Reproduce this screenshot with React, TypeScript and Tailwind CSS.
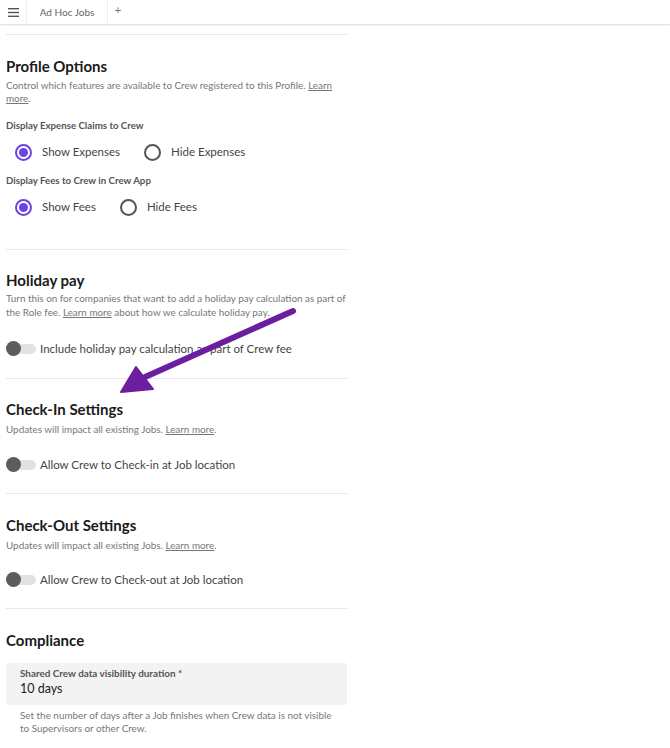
import React from "react";

const font = { fontFamily: "Lato, 'Noto Sans', sans-serif" };

function Radio({ checked, label }: { checked?: boolean; label: string }) {
  return (
    <div className="flex items-center gap-[10px]">
      {checked ? (
        <span className="w-[17px] h-[17px] rounded-full border-2 border-[#6a45e0] flex items-center justify-center">
          <span className="w-[9px] h-[9px] rounded-full bg-[#6a45e0]" />
        </span>
      ) : (
        <span className="w-[17px] h-[17px] rounded-full border-2 border-[#555]" />
      )}
      <span className="text-[11.5px] text-[#444]">{label}</span>
    </div>
  );
}

function Toggle({ label }: { label: string }) {
  return (
    <div className="flex items-center gap-[4px] h-[15px]">
      <div className="relative w-[30px] h-[15px] flex items-center">
        <div className="w-[30px] h-[10px] rounded-full bg-[#e2e2e2]" />
        <div className="absolute left-0 top-0 w-[15px] h-[15px] rounded-full bg-[#5c5c5c]" />
      </div>
      <span className="text-[11.5px] text-[#444] leading-[15px]">{label}</span>
    </div>
  );
}

function LearnMore({ children = "Learn more" }: { children?: React.ReactNode }) {
  return <span className="underline">{children}</span>;
}

export default function App() {
  return (
    <div className="relative w-[670px] h-[748px] bg-white overflow-hidden" style={font}>
      <div className="h-[25px] flex items-stretch border-b border-[#e6e6e6] shadow-[0_1px_2px_rgba(0,0,0,0.06)]">
        <div className="w-[27px] flex items-center justify-center border-r border-[#eee]">
          <svg width="11" height="9" viewBox="0 0 11 9">
            <rect x="0" y="0" width="11" height="1.4" fill="#555" />
            <rect x="0" y="3.8" width="11" height="1.4" fill="#555" />
            <rect x="0" y="7.6" width="11" height="1.4" fill="#555" />
          </svg>
        </div>
        <div className="w-[81px] flex items-center justify-center border-r border-[#eee] text-[10px] text-[#666]">
          Ad Hoc Jobs
        </div>
        <div className="w-[20px] flex items-center justify-center text-[12px] text-[#777] pb-[4px]">+</div>
      </div>

      <div className="w-[341px] ml-[6px]">
        <div className="h-[10px] border-b border-[#e8e8e8]" />

        {/* Profile Options */}
        <div className="pt-[21px] pb-[32px] border-b border-[#e8e8e8]">
          <h2 className="text-[15px] font-bold text-[#1a1a1a] leading-[20px]">Profile Options</h2>
          <p className="mt-[3px] text-[9.9px] leading-[13px] text-[#777]">
            Control which features are available to Crew registered to this Profile. <LearnMore>Learn more</LearnMore>.
          </p>
          <div className="mt-[14px] text-[9.7px] font-bold text-[#555] leading-[13px]">Display Expense Claims to Crew</div>
          <div className="mt-[10px] ml-[9px] flex items-center gap-[24px] h-[20px]">
            <Radio checked label="Show Expenses" />
            <Radio label="Hide Expenses" />
          </div>
          <div className="mt-[12px] text-[9.7px] font-bold text-[#555] leading-[13px]">Display Fees to Crew in Crew App</div>
          <div className="mt-[10px] ml-[9px] flex items-center gap-[24px] h-[20px]">
            <Radio checked label="Show Fees" />
            <Radio label="Hide Fees" />
          </div>
        </div>

        {/* Holiday pay */}
        <div className="pt-[20px] pb-[22px] border-b border-[#e8e8e8]">
          <h2 className="text-[15px] font-bold text-[#1a1a1a] leading-[20px]">Holiday pay</h2>
          <p className="mt-[1px] text-[9.9px] leading-[14px] text-[#777]">
            Turn this on for companies that want to add a holiday pay calculation as part of the Role fee. <LearnMore /> about how we calculate holiday pay.
          </p>
          <div className="mt-[22px]">
            <Toggle label="Include holiday pay calculation as part of Crew fee" />
          </div>
        </div>

        {/* Check-In */}
        <div className="pt-[20px] pb-[21px] border-b border-[#e8e8e8]">
          <h2 className="text-[15px] font-bold text-[#1a1a1a] leading-[20px]">Check-In Settings</h2>
          <p className="mt-[3px] text-[9.9px] leading-[14px] text-[#777]">
            Updates will impact all existing Jobs. <LearnMore />.
          </p>
          <div className="mt-[21px]">
            <Toggle label="Allow Crew to Check-in at Job location" />
          </div>
        </div>

        {/* Check-Out */}
        <div className="pt-[21px] pb-[21px] border-b border-[#e8e8e8]">
          <h2 className="text-[15px] font-bold text-[#1a1a1a] leading-[20px]">Check-Out Settings</h2>
          <p className="mt-[3px] text-[9.9px] leading-[14px] text-[#777]">
            Updates will impact all existing Jobs. <LearnMore />.
          </p>
          <div className="mt-[20px]">
            <Toggle label="Allow Crew to Check-out at Job location" />
          </div>
        </div>

        {/* Compliance */}
        <div className="pt-[21px]">
          <h2 className="text-[15px] font-bold text-[#1a1a1a] leading-[20px]">Compliance</h2>
          <div className="mt-[13px] bg-[#f3f3f3] rounded-[2px] h-[42px] px-[14px] pt-[4px]">
            <div className="text-[9.9px] font-bold text-[#555] leading-[12px]">Shared Crew data visibility duration *</div>
            <div className="text-[12.5px] text-[#222] leading-[18px] mt-[1px]">10 days</div>
          </div>
          <p className="mt-[4px] px-[14px] text-[9.9px] leading-[13px] text-[#777]">
            Set the number of days after a Job finishes when Crew data is not visible to Supervisors or other Crew.
          </p>
        </div>
      </div>

      {/* Annotation arrow */}
      <svg className="absolute left-0 top-0 pointer-events-none" width="670" height="748" viewBox="0 0 670 748">
        <line x1="293" y1="311" x2="145" y2="377" stroke="#6b1fa0" strokeWidth="6" strokeLinecap="round" />
        <polygon points="121,392 136,367 153,389" fill="#6b1fa0" stroke="#6b1fa0" strokeWidth="2" strokeLinejoin="round" />
      </svg>
    </div>
  );
}
